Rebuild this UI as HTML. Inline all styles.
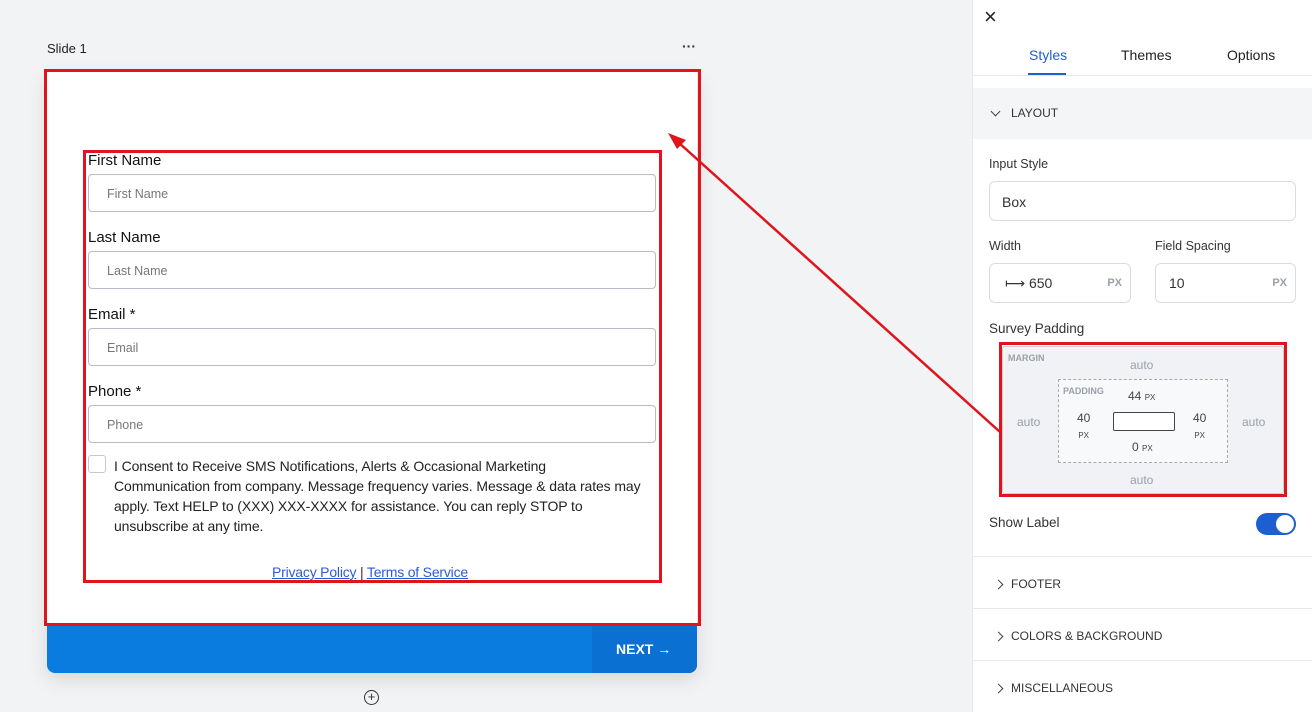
<!DOCTYPE html>
<html><head><style>
*{box-sizing:border-box;margin:0;padding:0}
body{width:1312px;height:712px;overflow:hidden;background:#f2f3f5;font-family:"Liberation Sans",sans-serif;position:relative;color:#111}
.a{position:absolute}
.lbl{position:absolute;left:88px;font-size:15px;color:#111}
.inp{position:absolute;left:88px;width:568px;height:38px;border:1px solid #b9bcc2;border-radius:4px;font-size:12.5px;color:#777;padding:12px 0 0 18px;background:#fff}
.side{position:absolute;left:972px;top:0;width:340px;height:712px;background:#fff;border-left:1px solid #e5e7eb}
.sec{position:absolute;left:0;width:340px;height:52px;border-top:1px solid #e5e7eb;font-size:12px;color:#333;padding:20px 0 0 38px}
.sec:before{content:"";position:absolute;left:22px;top:24px;width:6px;height:6px;border-right:1.5px solid #444;border-top:1.5px solid #444;transform:rotate(45deg)}
.box{position:absolute;border:1px solid #d9dce1;border-radius:6px;background:#fff}
.g{color:#9aa0a8;font-size:12px;position:absolute}
</style></head><body>
<div class="a" style="left:47px;top:41px;font-size:13px;color:#222">Slide 1</div>
<div class="a" style="left:682px;top:38px;font-size:14px;font-weight:bold;color:#333">···</div>
<div class="a" style="left:47px;top:72px;width:650px;height:601px;border-radius:0 0 8px 8px;box-shadow:0 6px 20px rgba(0,0,0,.12);background:#fff"></div>
<div class="a" style="left:47px;top:625px;width:650px;height:48px;background:#0a7ce0;border-radius:0 0 8px 8px;overflow:hidden">
<div class="a" style="left:545px;top:0;width:105px;height:48px;background:#0a70d2;color:#fff;font-weight:bold;font-size:14px;padding:16px 0 0 24px">NEXT →</div></div>
<div class="a" style="left:44px;top:69px;width:657px;height:557px;border:3px solid #e0141b"></div>
<div class="a" style="left:83px;top:150px;width:579px;height:433px;border:3px solid #e0141b"></div>
<div class="lbl" style="top:152px">First Name</div><div class="inp" style="top:174px">First Name</div>
<div class="lbl" style="top:229px">Last Name</div><div class="inp" style="top:251px">Last Name</div>
<div class="lbl" style="top:306px">Email *</div><div class="inp" style="top:328px">Email</div>
<div class="lbl" style="top:383px">Phone *</div><div class="inp" style="top:405px">Phone</div>
<div class="a" style="left:88px;top:455px;width:18px;height:18px;border:1px solid #c4c7cc;border-radius:3px"></div>
<div class="a" style="left:114px;top:456px;width:530px;font-size:14px;line-height:20px;color:#222;letter-spacing:-0.1px">I Consent to Receive SMS Notifications, Alerts &amp; Occasional Marketing Communication from company. Message frequency varies. Message &amp; data rates may apply. Text HELP to (XXX) XXX-XXXX for assistance. You can reply STOP to unsubscribe at any time.</div>
<div class="a" style="left:272px;top:564px;font-size:14px;color:#2a5bd7;letter-spacing:-0.2px"><u>Privacy Policy</u> <span style="color:#333">|</span> <u>Terms of Service</u></div>
<div class="a" style="left:364px;top:690px;width:15px;height:15px;border:1.5px solid #333;border-radius:50%;font-size:13px;line-height:11px;text-align:center;color:#333">+</div>
<div class="side">
<div class="a" style="left:11px;top:4px;font-size:22px;color:#222">×</div>
<div class="a" style="left:56px;top:47px;font-size:14px;color:#1d5fd1">Styles</div>
<div class="a" style="left:55px;top:73px;width:38px;height:3px;background:#1d5fd1"></div>
<div class="a" style="left:148px;top:47px;font-size:14px;color:#222">Themes</div>
<div class="a" style="left:254px;top:47px;font-size:14px;color:#222">Options</div>
<div class="a" style="left:0;top:75px;width:340px;height:1px;background:#e5e7eb"></div>
<div class="a" style="left:0;top:88px;width:340px;height:51px;background:#f4f5f7;font-size:12px;color:#333;padding:18px 0 0 38px">LAYOUT</div>
<div class="a" style="left:19px;top:108px;width:7px;height:7px;border-right:1.5px solid #444;border-bottom:1.5px solid #444;transform:rotate(45deg)"></div>
<div class="a" style="left:16px;top:157px;font-size:12.5px;color:#333">Input Style</div>
<div class="box" style="left:16px;top:181px;width:307px;height:40px;font-size:14px;padding:12px 0 0 12px;color:#333">Box</div>
<div class="a" style="left:16px;top:239px;font-size:12.5px;color:#333">Width</div>
<div class="a" style="left:182px;top:239px;font-size:12.5px;color:#333">Field Spacing</div>
<div class="box" style="left:16px;top:263px;width:142px;height:40px;font-size:14px;padding:11px 0 0 15px;color:#333">⟼ 650<span style="position:absolute;right:8px;top:13px;font-size:11px;font-weight:bold;color:#9aa0a8">PX</span></div>
<div class="box" style="left:182px;top:263px;width:141px;height:40px;font-size:14px;padding:11px 0 0 13px;color:#333">10<span style="position:absolute;right:8px;top:13px;font-size:11px;font-weight:bold;color:#9aa0a8">PX</span></div>
<div class="a" style="left:16px;top:321px;font-size:13.5px;color:#333">Survey Padding</div>
<div class="a" style="left:29px;top:346px;width:282px;height:148px;background:#f1f2f5;border:1px solid #ccc;border-radius:3px"></div>
<div class="a" style="left:26px;top:342px;width:288px;height:155px;border:3px solid #e0141b"></div>
<div class="g" style="left:35px;top:353px;font-size:9px;font-weight:bold">MARGIN</div>
<div class="g" style="left:157px;top:358px">auto</div>
<div class="g" style="left:157px;top:473px">auto</div>
<div class="g" style="left:44px;top:415px">auto</div>
<div class="g" style="left:269px;top:415px">auto</div>
<div class="a" style="left:85px;top:379px;width:170px;height:84px;border:1px dashed #aaa;background:#f8f9fb"></div>
<div class="g" style="left:90px;top:386px;font-size:9px;font-weight:bold">PADDING</div>
<div class="a" style="left:155px;top:389px;font-size:12px;color:#444">44 <small style="font-size:8px">PX</small></div>
<div class="a" style="left:159px;top:440px;font-size:12px;color:#444">0 <small style="font-size:8px">PX</small></div>
<div class="a" style="left:104px;top:410px;font-size:12px;color:#444;text-align:center;line-height:16px">40<br><small style="font-size:8px">PX</small></div>
<div class="a" style="left:220px;top:410px;font-size:12px;color:#444;text-align:center;line-height:16px">40<br><small style="font-size:8px">PX</small></div>
<div class="a" style="left:140px;top:412px;width:62px;height:19px;border:1px solid #444;border-radius:2px;background:#fff"></div>
<div class="a" style="left:16px;top:515px;font-size:13.5px;color:#333">Show Label</div>
<div class="a" style="left:283px;top:513px;width:40px;height:22px;border-radius:11px;background:#1d5fd1"><div class="a" style="left:20px;top:2px;width:18px;height:18px;border-radius:50%;background:#fff"></div></div>
<div class="sec" style="top:556px">FOOTER</div>
<div class="sec" style="top:608px">COLORS &amp; BACKGROUND</div>
<div class="sec" style="top:660px">MISCELLANEOUS</div>
</div>
<svg class="a" style="left:0;top:0;z-index:5" width="1312" height="712"><line x1="1000" y1="432" x2="678" y2="142" stroke="#e0141b" stroke-width="2.5"/><polygon points="668,133 686,140 677,149" fill="#e0141b"/></svg>
</body></html>
